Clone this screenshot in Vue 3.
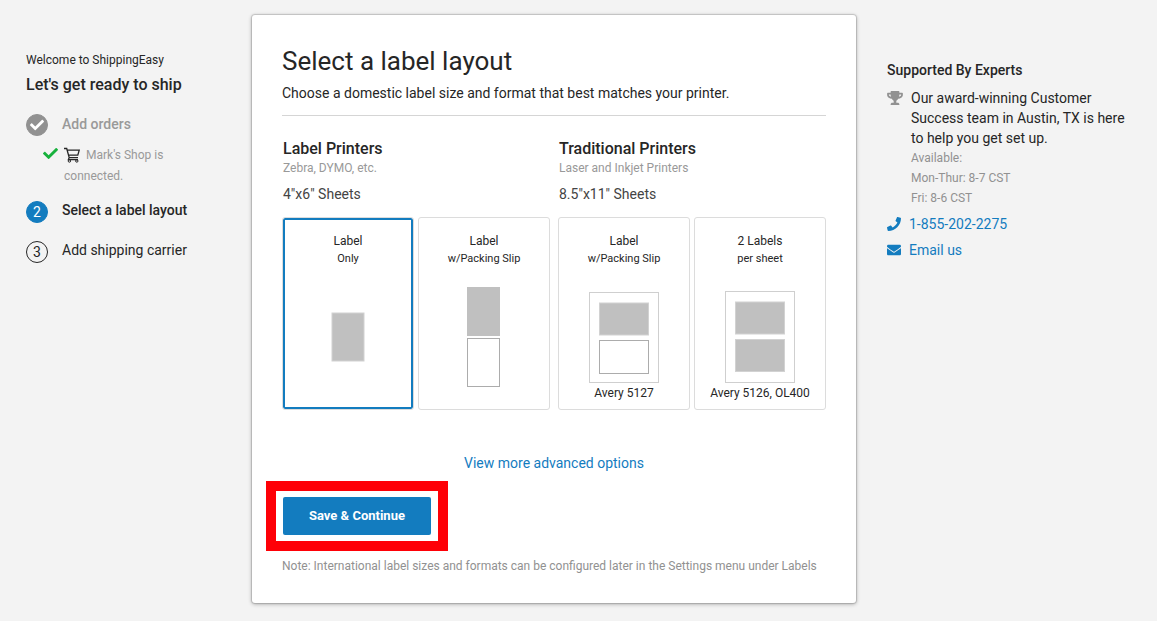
<script setup>
import { ref } from 'vue'

const selected = ref('label-only')

const groups = [
  {
    title: 'Label Printers',
    note: 'Zebra, DYMO, etc.',
    sheets: '4"x6" Sheets',
    options: [
      {
        id: 'label-only',
        name: 'Label',
        detail: 'Only',
        height: 100,
        shapes: [{ kind: 'soft', x: 19, y: 26, w: 32, h: 48 }],
      },
      {
        id: 'label-slip',
        name: 'Label',
        detail: 'w/Packing Slip',
        height: 100,
        shapes: [
          { kind: 'fill', x: 18, y: 0, w: 33, h: 49 },
          { kind: 'blank', x: 18.5, y: 51.5, w: 32, h: 48 },
        ],
      },
    ],
  },
  {
    title: 'Traditional Printers',
    note: 'Laser and Inkjet Printers',
    sheets: '8.5"x11" Sheets',
    options: [
      {
        id: 'avery-5127',
        name: 'Label',
        detail: 'w/Packing Slip',
        caption: 'Avery 5127',
        height: 96,
        shapes: [
          { kind: 'sheet', x: 0.5, y: 5.5, w: 69, h: 90 },
          { kind: 'soft', x: 10.5, y: 16, w: 49, h: 32 },
          { kind: 'blank', x: 10.5, y: 53.5, w: 49, h: 33 },
        ],
      },
      {
        id: 'avery-5126',
        name: '2 Labels',
        detail: 'per sheet',
        caption: 'Avery 5126, OL400',
        height: 96,
        shapes: [
          { kind: 'sheet', x: 0.5, y: 4.5, w: 69, h: 91 },
          { kind: 'soft', x: 10.5, y: 15, w: 49, h: 32 },
          { kind: 'soft', x: 10.5, y: 52.5, w: 49, h: 32 },
        ],
      },
    ],
  },
]

const checkPath =
  'M173.898 439.404l-166.4-166.4c-9.997-9.997-9.997-26.206 0-36.204l36.203-36.204c9.997-9.998 26.207-9.998 36.204 0L192 312.69 432.095 72.596c9.997-9.997 26.207-9.997 36.204 0l36.203 36.204c9.997 9.997 9.997 26.206 0 36.204l-294.4 294.401c-9.998 9.997-26.207 9.997-36.204-.001z'
</script>

<template>
  <div class="page">
    <aside class="progress">
      <p class="welcome">Welcome to ShippingEasy</p>
      <h2 class="ready">Let's get ready to ship</h2>
      <ol class="steps">
        <li class="step done">
          <span class="badge">
            <svg width="14" height="14" viewBox="0 0 512 512" aria-hidden="true"><path :d="checkPath" fill="currentColor" /></svg>
          </span>
          <span class="step-name">Add orders</span>
        </li>
        <li class="shop">
          <svg class="tick" width="15" height="15" viewBox="0 0 512 512" aria-hidden="true"><path :d="checkPath" fill="currentColor" /></svg>
          <p class="shop-text">
            <svg class="cart" width="16" height="16" viewBox="0 0 16 16" aria-hidden="true">
              <path d="M0 1.5H2.7L5.2 10.6H14M3.2 3.2H15.2L13.8 8.2H4.6M5.2 10.6L4.4 12.6H14" fill="none" stroke="currentColor" stroke-width="1.3" />
              <circle cx="5.4" cy="14" r="1.2" fill="none" stroke="currentColor" />
              <circle cx="12.8" cy="14" r="1.2" fill="none" stroke="currentColor" />
            </svg>
            Mark's Shop is connected.
          </p>
        </li>
        <li class="step numbered current" aria-current="step">
          <span class="badge">2</span>
          <span class="step-name">Select a label layout</span>
        </li>
        <li class="step numbered">
          <span class="badge">3</span>
          <span class="step-name">Add shipping carrier</span>
        </li>
      </ol>
    </aside>

    <main class="card">
      <h1 class="title">Select a label layout</h1>
      <p class="subtitle">Choose a domestic label size and format that best matches your printer.</p>
      <form @submit.prevent>
        <div class="groups">
          <section v-for="group in groups" :key="group.title" class="group">
            <h2 class="group-title">{{ group.title }}</h2>
            <p class="group-note">{{ group.note }}</p>
            <p class="group-sheets">{{ group.sheets }}</p>
            <div class="options">
              <label v-for="option in group.options" :key="option.id" class="option" :class="{ selected: selected === option.id }">
                <input v-model="selected" class="radio" type="radio" name="layout" :value="option.id" />
                <span class="option-name">{{ option.name }}</span>
                <span class="option-detail">{{ option.detail }}</span>
                <svg class="drawing" width="70" :height="option.height" aria-hidden="true">
                  <rect v-for="(s, i) in option.shapes" :key="i" :class="s.kind" :x="s.x" :y="s.y" :width="s.w" :height="s.h" />
                </svg>
                <span v-if="option.caption" class="caption">{{ option.caption }}</span>
              </label>
            </div>
          </section>
        </div>
        <p class="more"><a href="#advanced">View more advanced options</a></p>
        <div class="highlight">
          <button class="save" type="submit">Save &amp; Continue</button>
        </div>
      </form>
      <p class="note">Note: International label sizes and formats can be configured later in the Settings menu under Labels</p>
    </main>

    <aside class="support">
      <h2 class="support-title">Supported By Experts</h2>
      <div class="team">
        <svg width="16" height="14" viewBox="0 0 576 512" aria-hidden="true">
          <path fill="currentColor" d="M552 64H448V24c0-13.3-10.7-24-24-24H152c-13.3 0-24 10.7-24 24v40H24C10.7 64 0 74.7 0 88v56c0 35.7 22.5 72.4 61.9 100.7 31.5 22.7 69.8 37.1 110 41.7C203.3 338.5 240 360 240 360v72h-48c-35.3 0-64 20.7-64 56v12c0 6.6 5.4 12 12 12h296c6.6 0 12-5.4 12-12v-12c0-35.3-28.7-56-64-56h-48v-72s36.7-21.5 68.1-73.6c40.3-4.6 78.6-19 110-41.7 39.3-28.3 61.9-65 61.9-100.7V88c0-13.3-10.7-24-24-24zM99.3 192.8C74.9 175.2 64 155.6 64 144v-16h64.2c1 32.6 5.8 61.2 12.8 86.2-15.1-5.2-29.2-12.4-41.7-21.4zM512 144c0 16.1-17.7 36.1-35.7 48.8-12.5 9-26.7 16.2-41.8 21.4 7-25 11.8-53.6 12.8-86.2H512v16z" />
        </svg>
        <div>
          <p>Our award-winning Customer Success team in Austin, TX is here to help you get set up.</p>
          <p class="hours">Available:<br />Mon-Thur: 8-7 CST<br />Fri: 8-6 CST</p>
        </div>
      </div>
      <a class="contact" href="tel:18552022275">
        <svg width="14" height="14" viewBox="0 0 512 512" aria-hidden="true">
          <path fill="currentColor" d="M493.4 24.6l-104-24c-11.3-2.6-22.9 3.3-27.5 13.9l-48 112c-4.2 9.8-1.4 21.3 6.9 28l60.6 49.6c-36 76.7-98.9 140.5-177.2 177.2l-49.6-60.6c-6.8-8.3-18.2-11.1-28-6.9l-112 48C3.9 366.5-2 378.1.6 389.4l24 104C27.1 504.2 36.7 512 48 512c256.1 0 464-207.5 464-464 0-11.2-7.7-20.9-18.6-23.4z" />
        </svg>
        1-855-202-2275
      </a>
      <a class="contact" href="#email">
        <svg width="14" height="14" viewBox="0 0 512 512" aria-hidden="true">
          <path fill="currentColor" d="M502.3 190.8c3.9-3.1 9.7-.2 9.7 4.7V400c0 26.5-21.5 48-48 48H48c-26.5 0-48-21.5-48-48V195.6c0-5 5.7-7.8 9.7-4.7 22.4 17.4 52.1 39.5 154.1 113.6 21.1 15.4 56.7 47.8 92.2 47.6 35.7.3 72-32.8 92.3-47.6 102-74.1 131.6-96.3 154-113.7zM256 320c23.2.4 56.6-29.2 73.4-41.4 132.7-96.3 142.8-104.7 173.4-128.7 5.8-4.5 9.2-11.5 9.2-18.9v-19c0-26.5-21.5-48-48-48H48c-26.5 0-48 21.5-48 48v19c0 7.4 3.4 14.3 9.2 18.9 30.6 23.9 40.7 32.4 173.4 128.7 16.8 12.2 50.2 41.8 73.4 41.4z" />
        </svg>
        Email us
      </a>
    </aside>
  </div>
</template>

<style>
body {
  background: #f3f3f3;
}
</style>

<style scoped>
.page {
  display: grid;
  grid-template-columns: 195px minmax(0, 1fr) 251px;
  column-gap: 31px;
  align-items: start;
  padding: 15px 19px 17px 26px;
  font-family: Roboto, "Liberation Sans", sans-serif;
  font-size: 14px;
  line-height: 20px;
  color: #262626;
}

h1,
h2,
p,
ol {
  margin: 0;
  padding: 0;
}

a {
  color: #137cbf;
  text-decoration: none;
}

.progress {
  padding-top: 35px;
}

.welcome {
  font-size: 12px;
}

.ready {
  margin-top: 5px;
  font-size: 16px;
  font-weight: 500;
}

.steps {
  margin-top: 19px;
  list-style: none;
}

.step {
  display: flex;
  align-items: flex-start;
  gap: 14px;
  margin-bottom: 17px;
}

.badge {
  box-sizing: border-box;
  display: flex;
  align-items: center;
  justify-content: center;
  width: 22px;
  height: 22px;
  border: 1px solid #262626;
  border-radius: 50%;
}

.numbered .badge {
  margin-top: 1px;
}

.done {
  margin-bottom: 9px;
  color: #999;
  font-weight: 500;
}

.done .badge {
  border-color: #919191;
  background: #919191;
  color: #fff;
}

.current {
  font-weight: 500;
}

.current .badge {
  border-color: #137cbf;
  background: #137cbf;
  color: #fff;
  font-weight: 400;
}

.shop {
  display: flex;
  gap: 6px;
  margin-bottom: 13px;
  padding-left: 17px;
  color: #999;
  font-size: 12px;
  line-height: 21px;
}

.tick {
  flex: none;
  margin-top: 1px;
  color: #17b13c;
}

.shop-text {
  width: 120px;
}

.cart {
  margin-right: 3px;
  color: #262626;
  vertical-align: -4px;
}

.card {
  padding: 30px 30px 27px;
  border-radius: 3px;
  background: #fff;
  box-shadow: 0 0 1px 1px rgba(0, 0, 0, 0.14), 0 1px 4px rgba(0, 0, 0, 0.32);
}

.title {
  font-size: 26px;
  font-weight: 400;
  line-height: 32px;
}

.subtitle {
  margin-top: 6px;
  padding-bottom: 12px;
  border-bottom: 1px solid #d5d5d5;
}

.groups {
  display: grid;
  grid-template-columns: repeat(2, minmax(0, 1fr));
  gap: 8px;
  margin-top: 23px;
}

.group-title,
.group-note,
.group-sheets {
  padding-left: 1px;
}

.group-title {
  font-size: 16px;
  font-weight: 500;
}

.group-note {
  color: #999;
  font-size: 12px;
  line-height: 18px;
}

.group-sheets {
  margin-top: 7px;
  color: #444;
}

.options {
  display: grid;
  grid-template-columns: repeat(2, minmax(0, 1fr));
  gap: 4px;
  margin-top: 13px;
}

.option {
  position: relative;
  display: flex;
  flex-direction: column;
  align-items: center;
  box-sizing: border-box;
  min-height: 193px;
  padding-top: 14px;
  border: 1px solid #dcdcdc;
  border-radius: 3px;
  text-align: center;
  cursor: pointer;
}

.selected {
  box-shadow: inset 0 0 0 2px #137cbf;
}

.radio {
  position: absolute;
  width: 1px;
  height: 1px;
  margin: 0;
  opacity: 0;
}

.option-name {
  font-size: 12px;
  line-height: 18px;
}

.option-detail {
  font-size: 11px;
  line-height: 18px;
}

.drawing {
  margin-top: 19px;
}

.fill {
  fill: #c0c0c0;
}

.soft {
  fill: #c0c0c0;
  stroke: #d2d2d2;
}

.blank {
  fill: #fff;
  stroke: #acacac;
}

.sheet {
  fill: #fff;
  stroke: #cfcfcf;
}

.caption {
  font-size: 12px;
}

.more {
  margin-top: 43px;
  text-align: center;
}

.highlight {
  width: fit-content;
  margin: 8px 0 0 -16px;
  padding: 6px 7px;
  border: 10px solid #fe0007;
}

.save {
  display: block;
  height: 38px;
  padding: 0 26px;
  border: 0;
  border-radius: 2px;
  background: #137cbf;
  color: #fff;
  font: 700 13px/20px Roboto, "Liberation Sans", sans-serif;
  cursor: pointer;
}

.note {
  margin-top: 5px;
  color: #919191;
  font-size: 12px;
}

.support {
  padding-top: 45px;
}

.support-title {
  font-size: 14px;
  font-weight: 500;
}

.team {
  display: flex;
  gap: 8px;
  margin: 8px 0 6px;
}

.team svg {
  flex: none;
  margin-top: 3px;
  color: #919191;
}

.hours {
  color: #919191;
  font-size: 12px;
}

.contact {
  display: flex;
  align-items: center;
  gap: 8px;
  margin-bottom: 6px;
}
</style>
